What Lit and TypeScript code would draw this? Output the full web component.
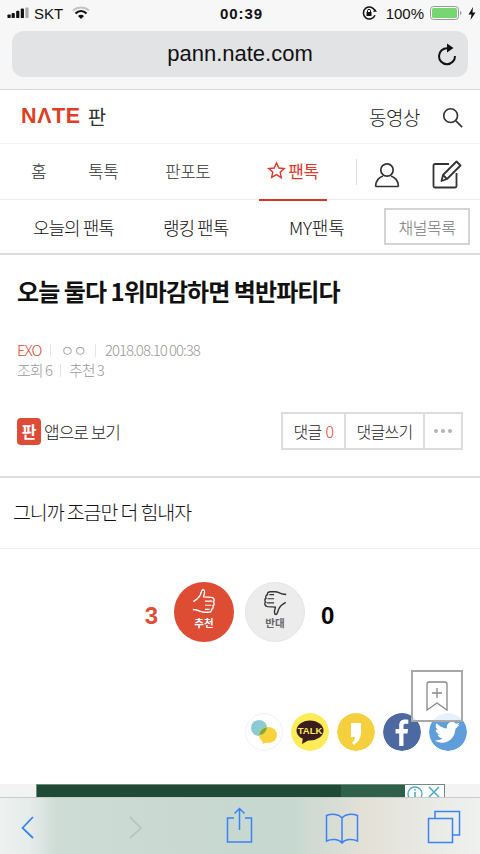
import { LitElement, html, css } from "lit";
import { customElement } from "lit/decorators.js";

@customElement("app-root")
export class AppRoot extends LitElement {
  static styles = css`
    :host { display: block; width: 480px; height: 854px; position: relative; overflow: hidden; background: #fff;
      font-family: "Noto Sans CJK KR", "Liberation Sans", sans-serif; color: #222; }
    svg { display: block; }
    .chrome { height: 89px; background: #f7f7f7; border-bottom: 1px solid #d6d6d6; box-sizing: content-box; display: flex; flex-direction: column; }
    .status { height: 26px; display: grid; grid-template-columns: 1fr auto 1fr; align-items: center; padding: 0 4px 0 7px; font-family: "Liberation Sans", sans-serif; font-size: 15px; color: #111; }
    .st-left, .st-right { display: flex; align-items: center; }
    .st-left { gap: 5px; }
    .st-right { justify-content: flex-end; gap: 5px; }
    .time { font-weight: 700; font-size: 15px; letter-spacing: 0.9px; }
    .url { margin: 5px 12px 0; height: 46px; background: #e2e3e5; border-radius: 12px; display: flex; align-items: center; justify-content: center; position: relative; font-family: "Liberation Sans", sans-serif; font-size: 22px; color: #111; }
    .reload { position: absolute; right: 10px; top: 11px; }
    .head { height: 54px; display: flex; align-items: center; padding: 0 17px 0 21px; border-bottom: 1px solid #f3f3f3; box-sizing: border-box; }
    .logo { font-family: "Liberation Sans", sans-serif; font-weight: 700; font-size: 21.500px; color: #e03e24; letter-spacing: 0.6px; }
    .pan { font-size: 20px; margin-left: 7px; color: #333; line-height: 1; }
    .video { margin-left: auto; font-size: 19px; font-weight: 300; color: #222; letter-spacing: -0.5px; margin-right: 21px; }
    .nav { height: 56px; display: flex; align-items: stretch; border-bottom: 1px solid #ececec; box-sizing: border-box; font-size: 17px; font-weight: 300; color: #333; letter-spacing: -0.5px; padding-left: 31px; }
    .nav a { display: flex; align-items: center; padding-bottom: 2px; }
    .n1 { width: 57px; }
    .n2 { width: 77px; }
    .n3 { width: 94px; }
    .n4 { width: 68px; gap: 2px; color: #e0392b; justify-content: center; border-bottom: 2px solid #d8352a; height: 57px; box-sizing: border-box; font-weight: 400; }
    .sep { width: 1px; height: 26px; background: #d9d9d9; margin: 15px 0 0 29px; }
    .ic1 { margin: 18px 0 0 17px; }
    .ic2 { margin: 15px 0 0 32px; }
    .sub { height: 55px; display: flex; align-items: center; border-bottom: 2px solid #ddd; box-sizing: border-box; font-size: 18px; font-weight: 300; color: #111; letter-spacing: -1px; padding-left: 33px; }
    .s1 { width: 130px; }
    .s2 { width: 126px; }
    .s3 { width: 95px; letter-spacing: -0.2px; }
    .chbtn { width: 86px; height: 37px; border: 2px solid #d4d4d4; box-sizing: border-box; display: flex; align-items: center; justify-content: center; color: #777; font-size: 16px; letter-spacing: -0.5px; }
    h1 { margin: 0; padding: 17px 0 0 17px; font-size: 24px; font-weight: 700; color: #111; letter-spacing: -0.95px; line-height: 38px; height: 38px; }
    .meta { margin: 30px 0 0 17px; font-size: 15px; font-weight: 300; color: #999; letter-spacing: -1px; line-height: 20px; }
    .row { display: flex; align-items: center; height: 20px; }
    .red { color: #e0452f; }
    .vs { width: 1px; height: 13px; background: #e5e5e5; margin: 0 9px; }
    .vs2 { margin: 0 8px; }
    .actions { display: flex; align-items: center; justify-content: space-between; margin: 32px 17px 0 17px; height: 38px; }
    .applink { display: flex; align-items: center; gap: 3px; font-size: 17px; font-weight: 300; letter-spacing: -1px; color: #222; }
    .appicon { width: 24px; height: 27px; border-radius: 4px; background: #de4b36; color: #fff; display: flex; align-items: center; justify-content: center; font-size: 16px; font-weight: 700; line-height: 1; letter-spacing: 0; }
    .btns { display: flex; height: 38px; border: 2px solid #ddd; box-sizing: border-box; font-size: 16px; font-weight: 300; letter-spacing: -0.7px; color: #222; }
    .btns div { display: flex; align-items: center; justify-content: center; gap: 4px; box-sizing: border-box; }
    .b1 { width: 63px; border-right: 2px solid #ddd; }
    .b2 { width: 79px; border-right: 2px solid #ddd; }
    .b3 { width: 36px; }
    .dots { display: flex; gap: 3px; }
    .dots i { width: 4px; height: 4px; border-radius: 50%; background: #b4b4b4; }
    .body { margin-top: 26px; border-top: 2px solid #ddd; border-bottom: 1px solid #eee; height: 73px; box-sizing: border-box; padding: 0 13px 3px; display: flex; align-items: center; font-size: 19.500px; font-weight: 300; letter-spacing: -1.100px; color: #111; }
    .vote { display: flex; align-items: center; justify-content: center; margin-top: 33px; height: 60px; padding-right: 1px; font-family: "Liberation Sans", sans-serif; font-weight: 700; font-size: 24px; }
    .cnt-l { color: #e04e35; margin: 8px 16px 0 0; }
    .cnt-r { color: #000; margin: 8px 0 0 16px; }
    .circle { width: 60px; height: 60px; border-radius: 50%; display: flex; flex-direction: column; align-items: center; font-family: "Noto Sans CJK KR", sans-serif; font-size: 10.500px; font-weight: 700; line-height: 12px; }
    .circle svg { margin: 6px 0 1px; }
    .up { background: #dd4c33; color: #fff; margin-right: 11px; }
    .down { background: #ececec; color: #666; border: 1px solid #e6e6e6; box-sizing: border-box; }
    .down svg { margin-top: 5px; }
    .share { display: flex; justify-content: flex-end; gap: 8px; margin: 71px 13px 0 0; }
    .sico { width: 38px; height: 38px; border-radius: 50%; flex: none; }
    .bm { position: absolute; left: 411px; top: 670px; width: 52px; height: 52px; border: 2px solid #a8a8a8; background: rgba(255,255,255,.85); box-sizing: border-box; display: flex; align-items: center; justify-content: center; }
    .ad { position: absolute; left: 36px; top: 784px; width: 409px; height: 14px; background: #1f4a36; border: 1px solid #6d8f80; box-sizing: border-box; display: flex; justify-content: flex-end; }
    .ad-strip { position: absolute; left: 304px; top: 0; width: 66px; height: 14px; background: #2f6049; }
    .ad-x { position: relative; width: 39px; height: 14px; background: #fff; }
    .graybg { position: absolute; left: 0; right: 0; top: 784px; height: 13px; background: #f3f3f3; }
    .toolbar { position: absolute; left: 0; right: 0; bottom: 0; height: 57px; border-top: 1px solid #c8cbc9; box-sizing: border-box;
      background: linear-gradient(90deg, #eef1f0 0%, #e6ecea 6%, #cddcd5 12%, #c9d9d1 40%, #c6d8d0 60%, #d4dcd4 68%, #e3e1d6 76%, #e6e6df 84%, #eef1ef 100%); }
    .toolbar svg { position: absolute; }
  `;

  render() {
    return html`
      <div class="chrome">
        <div class="status">
          <div class="st-left">
            <svg width="22" height="14" viewBox="0 0 24 14"><rect x="0.500" y="8.500" width="3.500" height="4" rx="1" fill="#111"/><rect x="5" y="7" width="3.500" height="5.500" rx="1" fill="#111"/><rect x="10" y="4.500" width="3.500" height="8" rx="1" fill="#111"/><rect x="15" y="2" width="3.500" height="10.500" rx="1" fill="#111"/><rect x="20" y="1" width="3.500" height="11.500" rx="1" fill="#aaa"/></svg>
            <span>SKT</span>
            <svg width="18" height="14" viewBox="0 0 18 14" style="margin-left:4px"><path d="M1 4.500C5.500 0.500 12.500 0.500 17 4.500" fill="none" stroke="#c4c4c4" stroke-width="2"/><path d="M3.500 7.500C6.800 4.300 11.200 4.300 14.500 7.500" fill="none" stroke="#111" stroke-width="2.200"/><path d="M6 10C7.800 8.400 10.200 8.400 12 10L9 13Z" fill="#111"/></svg>
          </div>
          <div class="time">00:39</div>
          <div class="st-right">
            <svg width="16" height="14" viewBox="0 0 16 14"><path d="M13 9.200A6 6 0 1 1 13 4.800" fill="none" stroke="#111" stroke-width="1.500"/><path d="M11 5.800h4l-2-2.800Z" fill="#111"/><rect x="4.500" y="6" width="5" height="4" fill="#111"/><path d="M5.500 6V4.800a1.500 1.500 0 0 1 3 0V6" fill="none" stroke="#111"/></svg>
            <span style="margin-left:3px;margin-right:1px">100%</span>
            <svg width="32" height="14" viewBox="0 0 32 14"><rect x="0.500" y="0.500" width="28" height="13" rx="3" fill="none" stroke="#999"/><rect x="2" y="2" width="25" height="10" rx="1.500" fill="#76d672"/><path d="M30 5v4a2 2 0 0 0 1.500-2 2 2 0 0 0-1.500-2Z" fill="#999"/></svg>
            <svg width="8" height="13" viewBox="0 0 8 13" style="margin-left:1px"><path d="M5 0L0.500 7.500H3.500L2.500 13L7.500 5.500H4.500Z" fill="#111"/></svg>
          </div>
        </div>
        <div class="url">pann.nate.com
          <svg class="reload" width="22" height="24" viewBox="0 0 22 24"><path d="M11.500 6.200A8 8 0 1 0 19 14" fill="none" stroke="#111" stroke-width="2"/><path d="M11 1.500L17.500 6L11 10.500Z" fill="#111"/></svg>
        </div>
      </div>
      <div class="head">
        <span class="logo">NΛTE</span><span class="pan">판</span>
        <span class="video">동영상</span>
        <svg width="22" height="22" viewBox="0 0 24 24"><circle cx="10.500" cy="10.500" r="7.500" fill="none" stroke="#333" stroke-width="1.800"/><path d="M16 16L23 23" stroke="#333" stroke-width="1.800"/></svg>
      </div>
      <div class="nav">
        <a class="n1">홈</a><a class="n2">톡톡</a><a class="n3">판포토</a>
        <a class="n4"><svg width="19" height="19" viewBox="0 0 24 24"><path d="M12 2.500l2.900 6.300 6.900.8-5.100 4.700 1.400 6.800L12 17.200l-6.100 3.400 1.400-6.800L2.200 9.600l6.900-.8Z" fill="none" stroke="#e0392b" stroke-width="1.800"/></svg>팬톡</a>
        <div class="sep"></div>
        <svg class="ic1" width="26" height="26" viewBox="0 0 26 26"><circle cx="13" cy="8" r="6.200" fill="none" stroke="#333" stroke-width="1.700"/><path d="M1.500 24.500c0-6 4-9.500 7.500-10.500M24.500 24.500c0-6-4-9.500-7.500-10.500M1.500 24.500h23" fill="none" stroke="#333" stroke-width="1.700"/></svg>
        <svg class="ic2" width="30" height="30" viewBox="0 0 30 30"><path d="M17 5H3a1.500 1.500 0 0 0-1.500 1.500V27A1.500 1.500 0 0 0 3 28.500H23A1.500 1.500 0 0 0 24.500 27V14" fill="none" stroke="#333" stroke-width="1.800"/><path d="M9.500 22l1.500-6L24.500 2.500l4 4L15 20Z M11 16l4 4" fill="none" stroke="#333" stroke-width="1.800" stroke-linejoin="round"/></svg>
      </div>
      <div class="sub">
        <span class="s1">오늘의 팬톡</span><span class="s2">랭킹 팬톡</span><span class="s3">MY팬톡</span>
        <div class="chbtn">채널목록</div>
      </div>
      <h1>오늘 둘다 1위마감하면 벽반파티다</h1>
      <div class="meta">
        <div class="row"><span class="red">EXO</span><i class="vs"></i><span style="letter-spacing:-1px">ㅇㅇ</span><i class="vs"></i><span>2018.08.10 00:38</span></div>
        <div class="row"><span>조회 6</span><i class="vs vs2"></i><span>추천 3</span></div>
      </div>
      <div class="actions">
        <div class="applink"><div class="appicon">판</div>앱으로 보기</div>
        <div class="btns">
          <div class="b1">댓글 <span class="red">0</span></div>
          <div class="b2">댓글쓰기</div>
          <div class="b3"><span class="dots"><i></i><i></i><i></i></span></div>
        </div>
      </div>
      <div class="body">그니까 조금만 더 힘내자</div>
      <div class="vote">
        <span class="cnt-l">3</span>
        <div class="circle up">
          <svg width="28" height="28" viewBox="0 0 28 30"><path d="M2.500 14.500c3-1.500 6-4 7.500-7 1-2.500 1-5 3-6 2 0 1.800 3.500 1 6l-.5 2 8.500.5c3.500.5 3.500 4 2 5 1.500 1 1 3.500-.5 4 1 1.500 0 3.500-1.500 3.800.5 1.800-1 3.200-3 3.200H14c-3 0-5-1.500-8-2.500L2 23" fill="none" stroke="#fff" stroke-width="1.500" stroke-linejoin="round"/><path d="M15 14h8M15 18.500h7M15 23h5" stroke="#fff" stroke-width="1.300"/></svg>
          <span>추천</span>
        </div>
        <div class="circle down">
          <svg width="28" height="28" viewBox="0 0 28 30"><path d="M25.500 15.500c-3 1.500-6 4-7.500 7-1 2.500-1 5-3 6-2 0-1.800-3.500-1-6l.5-2-8.500-.5c-3.500-.5-3.500-4-2-5-1.500-1-1-3.500.5-4-1-1.500 0-3.500 1.500-3.800-.5-1.800 1-3.200 3-3.200H14c3 0 5 1.500 8 2.500L26 7" fill="none" stroke="#333" stroke-width="1.500" stroke-linejoin="round"/><path d="M13 16H5M13 11.500H6M13 7H8" stroke="#333" stroke-width="1.300"/></svg>
          <span>반대</span>
        </div>
        <span class="cnt-r">0</span>
      </div>
      <div class="share">
        <svg class="sico" viewBox="0 0 38 38"><circle cx="19" cy="19" r="18.500" fill="#fff" stroke="#eee"/><circle cx="14" cy="15" r="8" fill="#8ccbd6"/><ellipse cx="23" cy="22" rx="9" ry="8" fill="#f8d33c"/><path d="M22 14.500a8 8 0 0 0-7.800 7.500A8 8 0 0 0 22 14.500Z" fill="#7eab3c"/><path d="M17 27l1 4 4-2Z" fill="#f8d33c"/></svg>
        <svg class="sico" viewBox="0 0 38 38"><circle cx="19" cy="19" r="19" fill="#fdeb58"/><ellipse cx="19" cy="17.500" rx="13.500" ry="10" fill="#3a1d1d"/><path d="M12 24l-1 7 7-4Z" fill="#3a1d1d"/><text x="19" y="21" text-anchor="middle" font-family="Liberation Sans" font-weight="700" font-size="9.500" fill="#fdeb58">TALK</text></svg>
        <svg class="sico" viewBox="0 0 38 38"><circle cx="19" cy="19" r="19" fill="#f4d03f"/><path d="M14 10h10v10c0 5-3 9-7 12l-2-2c2-2 3-4 3-6h-4Z" fill="#fff"/></svg>
        <svg class="sico" viewBox="0 0 38 38"><circle cx="19" cy="19" r="19" fill="#4d69a2"/><path d="M20.500 33V20.500h4l.6-4.500h-4.600v-3c0-1.400.5-2.200 2.300-2.200h2.500V6.800c-1-.2-2.200-.3-3.300-.3-3.500 0-5.800 2-5.800 6V16H12.500v4.500h3.700V33Z" fill="#fff"/></svg>
        <svg class="sico" viewBox="0 0 38 38"><circle cx="19" cy="19" r="19" fill="#5f9edb"/><path d="M31 11.500c-1 .4-2 .7-3 .8 1.100-.7 1.900-1.700 2.300-2.900-1 .6-2.100 1-3.300 1.300a5.200 5.200 0 0 0-8.900 4.800c-4.300-.2-8.100-2.300-10.700-5.400-1.400 2.400-.7 5.400 1.600 6.900-.8 0-1.600-.2-2.300-.6 0 2.500 1.800 4.700 4.200 5.200-.8.200-1.600.2-2.300.1.700 2.100 2.600 3.600 4.900 3.600-2.200 1.700-5 2.500-7.700 2.200 7.500 4.800 19.700 1.900 20.700-11.700 1-.7 1.900-1.600 2.500-2.500Z" fill="#fff"/></svg>
      </div>
      <div class="bm">
        <svg width="22" height="30" viewBox="0 0 22 30"><path d="M1 29V3a2 2 0 0 1 2-2h16a2 2 0 0 1 2 2v26l-10-7Z" fill="none" stroke="#888" stroke-width="1.300"/><path d="M11 7v10M6 12h10" stroke="#888" stroke-width="1.300"/></svg>
      </div>
      <div class="graybg"></div>
      <div class="ad">
        <div class="ad-strip"></div>
        <div class="ad-x">
          <svg width="39" height="14" viewBox="0 0 39 14"><circle cx="10" cy="9" r="7" fill="none" stroke="#4aa9c6" stroke-width="1.300"/><path d="M10 7v6M10 4v1.500" stroke="#4aa9c6" stroke-width="1.600"/><path d="M24 2l10 10M34 2L24 12" stroke="#4aa9c6" stroke-width="1.500"/></svg>
        </div>
      </div>
      <div class="toolbar">
        <svg style="left:20px;top:17px" width="15" height="24" viewBox="0 0 15 24"><path d="M13 2L2.500 13 13 23" fill="none" stroke="#3a82f7" stroke-width="1.800"/></svg>
        <svg style="left:128px;top:17px" width="15" height="24" viewBox="0 0 15 24"><path d="M2 2l11 11L2 23" fill="none" stroke="#b9c6c1" stroke-width="1.800"/></svg>
        <svg style="left:226px;top:9px" width="27" height="36" viewBox="0 0 27 36"><path d="M8 11H1.500v24h24V11H19M13.500 1.500V23M8.500 6.500l5-5 5 5" fill="none" stroke="#3a82f7" stroke-width="1.500"/></svg>
        <svg style="left:325px;top:14px" width="34" height="32" viewBox="0 0 34 32"><path d="M17 6C14 2 7 1.500 1.500 3.500V29C7 26.500 14 27 17 31 20 27 27 26.500 32.500 29V3.500C27 1.500 20 2 17 6ZM17 6V31" fill="none" stroke="#3a82f7" stroke-width="1.500"/></svg>
        <svg style="left:427px;top:12px" width="34" height="34" viewBox="0 0 34 34"><path d="M8 8V1.500h24.500V25H26" fill="none" stroke="#3a82f7" stroke-width="1.500"/><rect x="1.500" y="8.500" width="24" height="24" fill="none" stroke="#3a82f7" stroke-width="1.500"/></svg>
      </div>
    `;
  }
}
